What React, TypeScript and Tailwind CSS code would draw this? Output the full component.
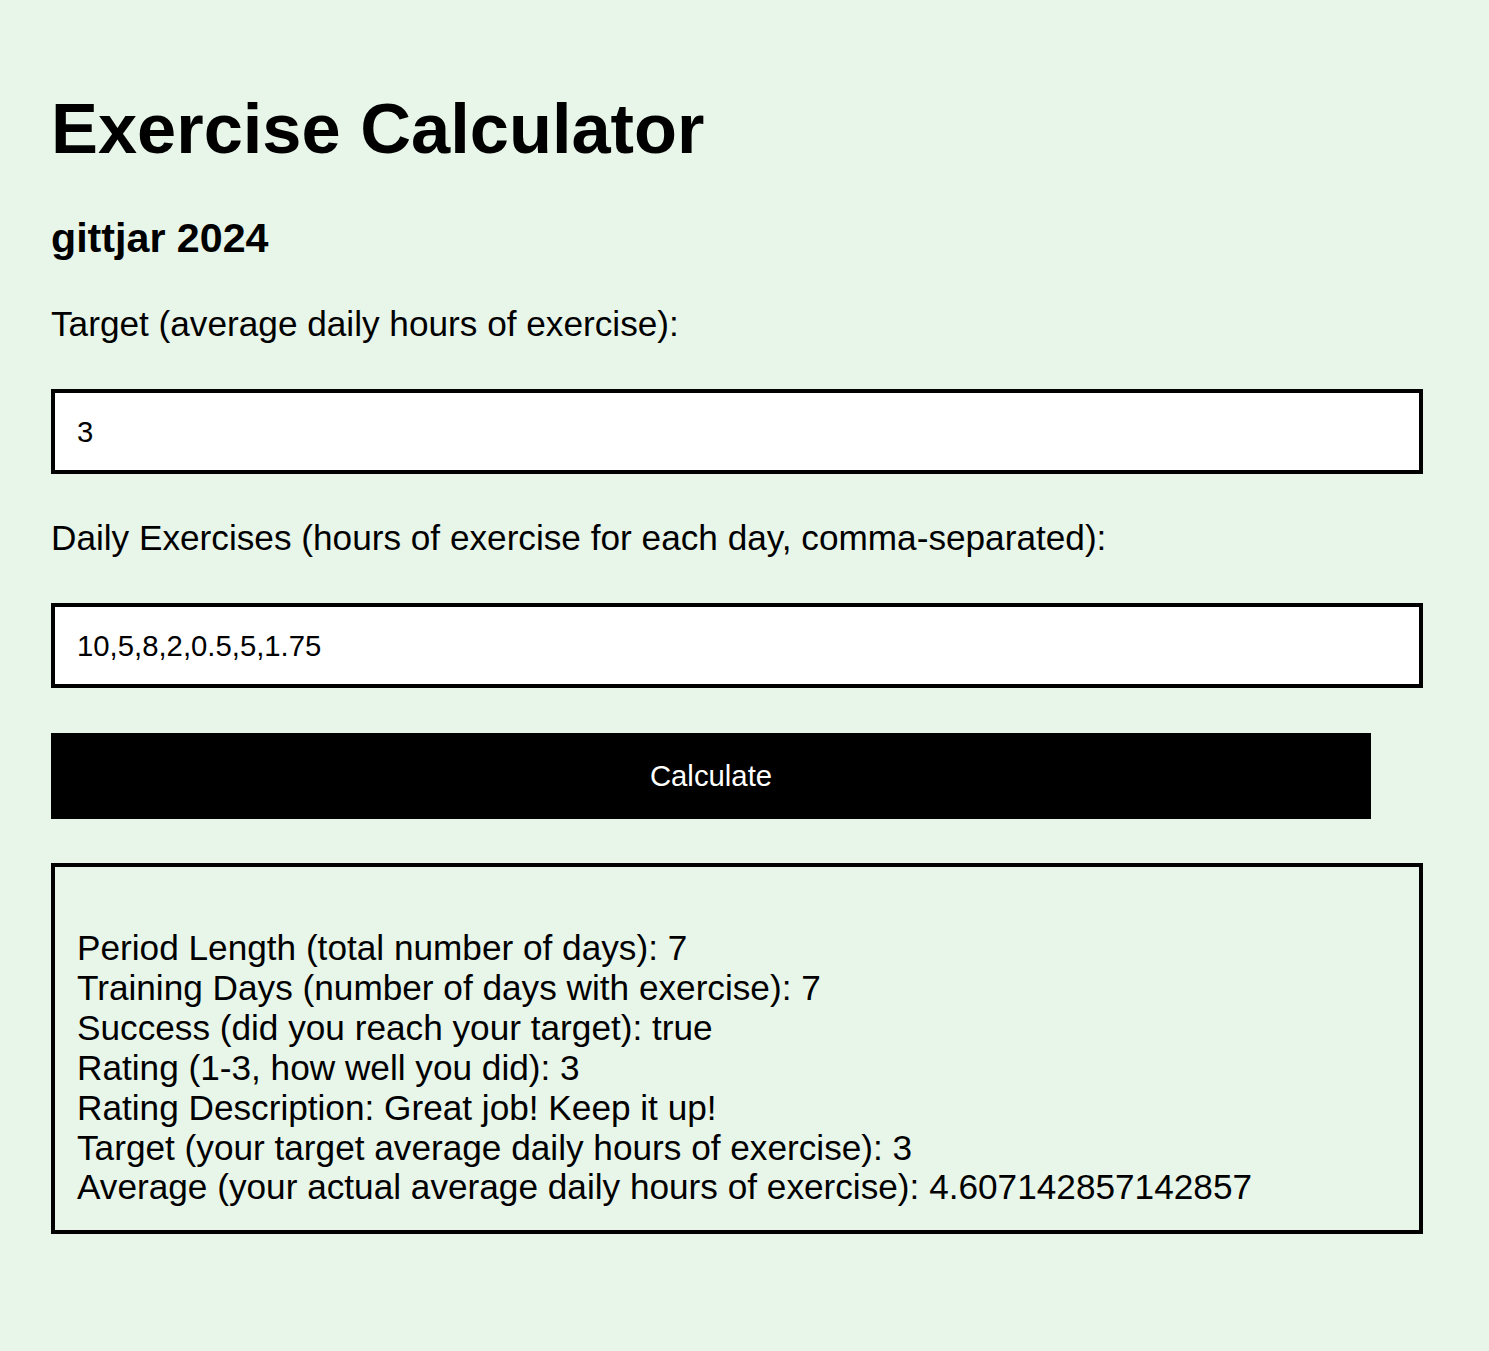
import { useState } from "react";

type Result = {
  periodLength: number;
  trainingDays: number;
  success: boolean;
  rating: number;
  ratingDescription: string;
  target: number;
  average: number;
};

const calculateExercises = (hours: number[], target: number): Result => {
  const periodLength = hours.length;
  const trainingDays = hours.filter((h) => h > 0).length;
  const average = periodLength ? hours.reduce((a, b) => a + b, 0) / periodLength : 0;
  const success = average >= target;
  let rating = 1;
  let ratingDescription = "You need to work harder.";
  if (average >= target) {
    rating = 3;
    ratingDescription = "Great job! Keep it up!";
  } else if (average >= target * 0.5) {
    rating = 2;
    ratingDescription = "Not too bad but could be better.";
  }
  return { periodLength, trainingDays, success, rating, ratingDescription, target, average };
};

export default function App() {
  const [target, setTarget] = useState("3");
  const [daily, setDaily] = useState("10,5,8,2,0.5,5,1.75");
  const [result, setResult] = useState<Result | null>(() =>
    calculateExercises([10, 5, 8, 2, 0.5, 5, 1.75], 3)
  );

  const handleCalculate = () => {
    const hours = daily
      .split(",")
      .map((s) => Number(s.trim()))
      .filter((n) => !isNaN(n));
    setResult(calculateExercises(hours, Number(target)));
  };

  return (
    <main className="min-h-[1351px] bg-[#e8f5e9] text-black font-['Liberation_Sans',Arial,Helvetica,sans-serif]">
      <div className="pl-[51px] pt-[88px] pb-[100px] w-[1371px]">
        <h1 className="text-[70.4px] leading-[81px] font-bold">Exercise Calculator</h1>
        <h3 className="mt-[46px] text-[41.2px] leading-[47px] font-bold">gittjar 2024</h3>

        <label htmlFor="target" className="block mt-[42px] text-[35.2px] leading-[40px]">
          Target (average daily hours of exercise):
        </label>
        <input
          id="target"
          value={target}
          onChange={(e) => setTarget(e.target.value)}
          className="block mt-[45px] box-content w-[1320px] h-[33px] px-[22px] py-[22px] border-[4px] border-black bg-white text-[29.3px] outline-none"
        />

        <label htmlFor="daily" className="block mt-[44px] text-[35.2px] leading-[40px]">
          Daily Exercises (hours of exercise for each day, comma-separated):
        </label>
        <input
          id="daily"
          value={daily}
          onChange={(e) => setDaily(e.target.value)}
          className="block mt-[45px] box-content w-[1320px] h-[33px] px-[22px] py-[22px] border-[4px] border-black bg-white text-[29.3px] outline-none"
        />

        <button
          onClick={handleCalculate}
          className="block mt-[45px] w-[1320px] h-[86px] bg-black text-white text-[29.3px] cursor-pointer"
        >
          Calculate
        </button>

        {result && (
          <div className="mt-[44px] box-content w-[1320px] border-[4px] border-black px-[22px] pt-[61px] pb-[23px] text-[35.2px] leading-[39.9px]">
            <div>Period Length (total number of days): {result.periodLength}</div>
            <div>Training Days (number of days with exercise): {result.trainingDays}</div>
            <div>Success (did you reach your target): {String(result.success)}</div>
            <div>Rating (1-3, how well you did): {result.rating}</div>
            <div>Rating Description: {result.ratingDescription}</div>
            <div>Target (your target average daily hours of exercise): {result.target}</div>
            <div>Average (your actual average daily hours of exercise): {result.average}</div>
          </div>
        )}
      </div>
    </main>
  );
}
